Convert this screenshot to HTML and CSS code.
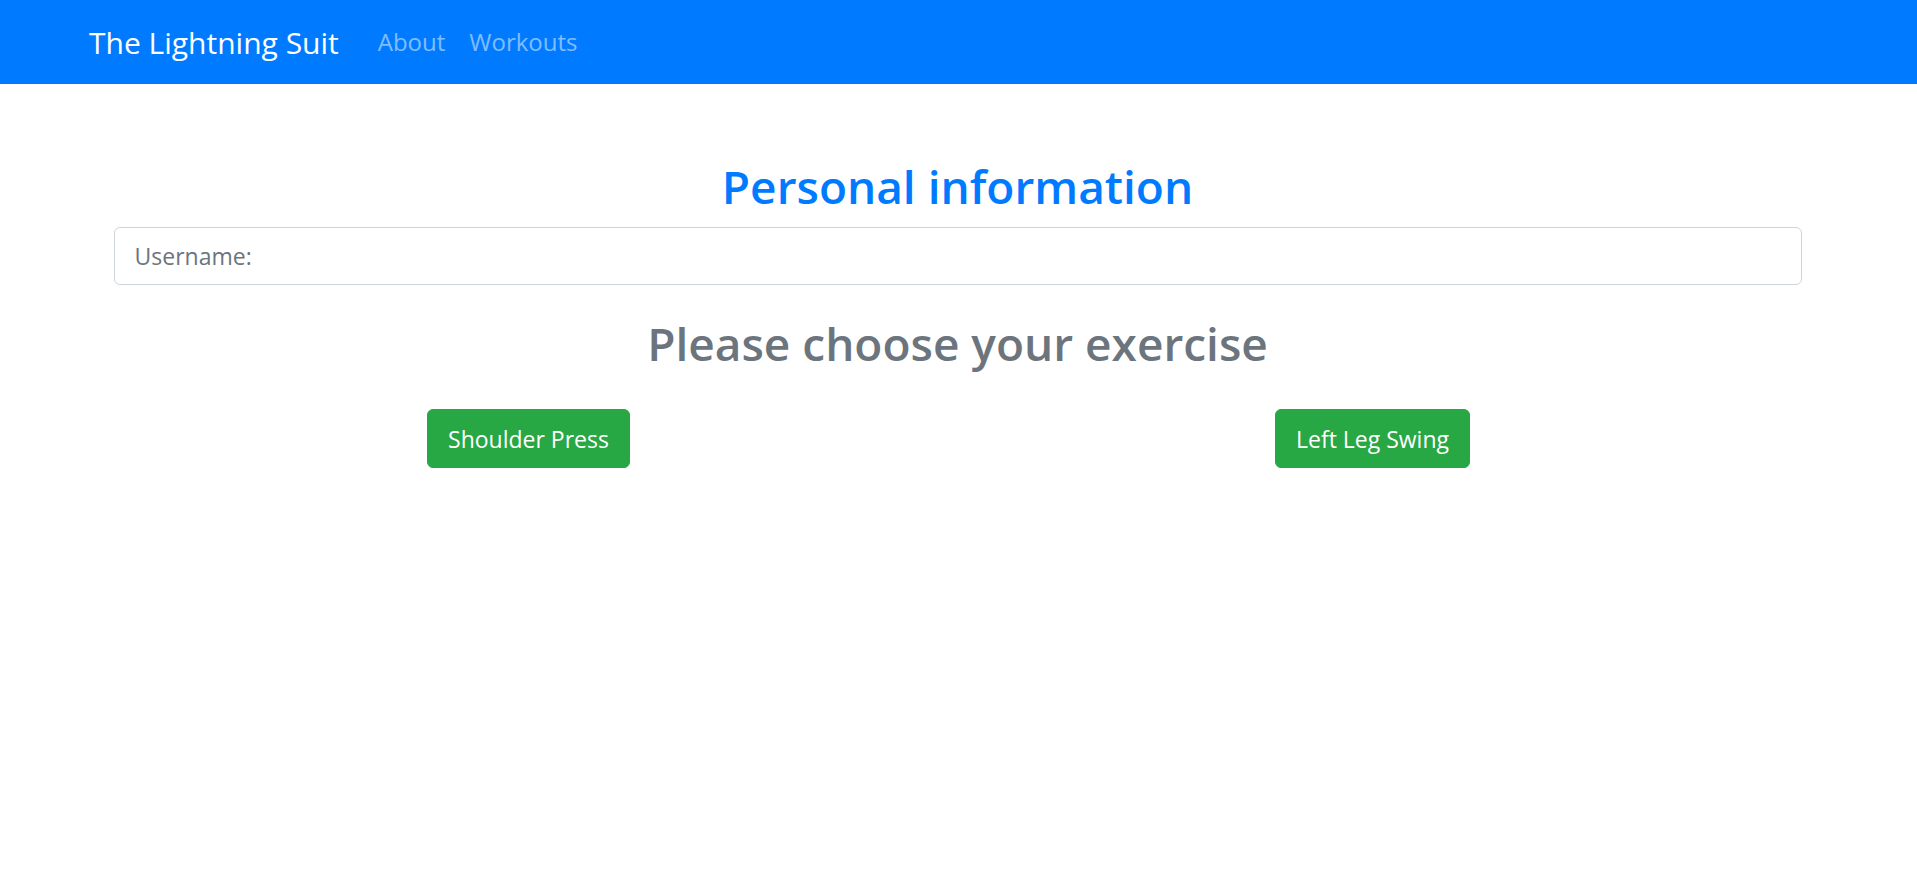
FILE: index.html
```html
<!DOCTYPE html>
<html lang="en">
<head>
<meta charset="utf-8">
<title>The Lightning Suit</title>
<link rel="stylesheet" href="styles.css">
</head>
<body>
<nav class="navbar">
  <a class="brand" href="#">The Lightning Suit</a>
  <ul class="nav">
    <li><a class="nav-link" href="#">About</a></li>
    <li><a class="nav-link" href="#">Workouts</a></li>
  </ul>
</nav>
<main class="main">
  <h1 class="title">Personal information</h1>
  <input class="field" type="text" placeholder="Username:">
  <h2 class="subtitle">Please choose your exercise</h2>
  <div class="choices">
    <div class="choice"><button class="btn">Shoulder Press</button></div>
    <div class="choice"><button class="btn">Left Leg Swing</button></div>
  </div>
</main>
</body>
</html>
```
FILE: styles.css
```css
* { box-sizing: border-box; }
html, body { margin: 0; padding: 0; }
body {
  font-family: "Open Sans", "Noto Sans", sans-serif;
  background: #fff;
  color: #212529;
}
.navbar {
  height: 84px;
  background: #007bff;
  display: flex;
  align-items: center;
  padding: 0 89px;
}
.brand {
  color: #fff;
  text-decoration: none;
  font-size: 30px;
  line-height: 45px;
  margin-right: 27px;
}
.nav {
  display: flex;
  list-style: none;
  margin: 0;
  padding: 0;
}
.nav-link {
  display: block;
  padding: 0 12px;
  color: rgba(255,255,255,.5);
  text-decoration: none;
  font-size: 24px;
  line-height: 36px;
}
.main {
  width: 1688px;
  margin: 0 auto;
  padding-top: 75px;
  transform: translateX(-1px);
}
.title, .subtitle {
  text-align: center;
  font-size: 46px;
  line-height: 1.2;
  font-weight: 600;
}
.title { color: #007bff; margin: 0 0 13px; }
.subtitle { color: #6c757d; margin: 31px 0 38px; }
.field {
  display: block;
  width: 100%;
  height: 58px;
  padding: 9px 20px;
  font-family: inherit;
  font-size: 23px;
  color: #495057;
  border: 1px solid #ced4da;
  border-radius: 6px;
  outline: none;
}
.field::placeholder { color: #6c757d; }
.choices {
  display: grid;
  grid-template-columns: 1fr 1fr;
  width: 1688px;
  margin-left: -7px;
}
.choice { display: flex; justify-content: center; }
.btn {
  font-family: inherit;
  font-size: 23px;
  line-height: 36px;
  padding: 10.5px 20px;
  color: #fff;
  background: #28a745;
  border: 1px solid #28a745;
  border-radius: 6px;
  cursor: pointer;
}
```
